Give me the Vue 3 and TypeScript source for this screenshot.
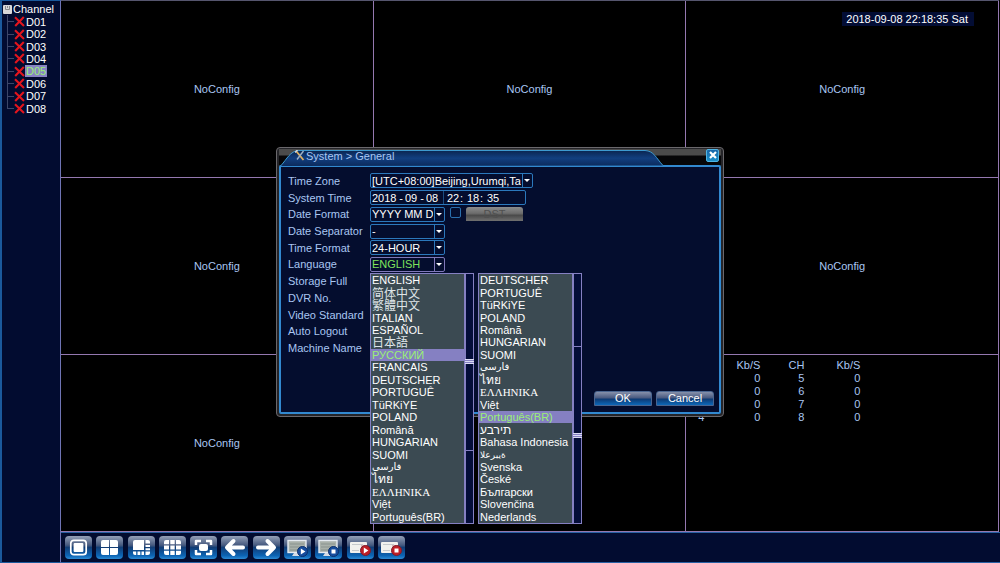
<script setup lang="ts">
import { ref } from 'vue'

interface Lang {
  name: string
  kind?: 'cjk' | 'arabic' | 'thai' | 'greek' | 'hebrew' | 'forced'
}

const channels = ['D01', 'D02', 'D03', 'D04', 'D05', 'D06', 'D07', 'D08']
const activeChannel = ref('D05')

const tiles = [true, true, true, true, false, true, true, false, false]

const rates = [
  ['', 0, 5, 0],
  ['', 0, 6, 0],
  ['', 0, 7, 0],
  [4, 0, 8, 0],
]

const languages: Lang[] = [
  { name: 'ENGLISH' },
  { name: '简体中文', kind: 'cjk' },
  { name: '繁體中文', kind: 'cjk' },
  { name: 'ITALIAN' },
  { name: 'ESPAÑOL' },
  { name: '日本語', kind: 'cjk' },
  { name: 'РУССКИЙ' },
  { name: 'FRANCAIS' },
  { name: 'DEUTSCHER' },
  { name: 'PORTUGUÊ' },
  { name: 'TüRKiYE' },
  { name: 'POLAND' },
  { name: 'Română' },
  { name: 'HUNGARIAN' },
  { name: 'SUOMI' },
  { name: 'فارسی', kind: 'arabic' },
  { name: 'ไทย', kind: 'thai' },
  { name: 'ΕΛΛΗΝΙΚΑ', kind: 'greek' },
  { name: 'Việt' },
  { name: 'Português(BR)' },
  { name: 'עברית', kind: 'hebrew' },
  { name: 'Bahasa Indonesia' },
  { name: 'العربية', kind: 'forced' },
  { name: 'Svenska' },
  { name: 'České' },
  { name: 'Български' },
  { name: 'Slovenčina' },
  { name: 'Nederlands' },
]

const lists = [
  { id: 'first', items: languages.slice(0, 20), active: 'РУССКИЙ', scrolled: false },
  { id: 'second', items: languages.slice(8), active: 'Português(BR)', scrolled: true },
]

const otherSettings = ['Storage Full', 'DVR No.', 'Video Standard', 'Auto Logout', 'Machine Name']

const tools = ['Single view', 'Four views', 'Eight views', 'Nine views', 'Full screen', 'Previous', 'Next', 'Start playback', 'Stop playback', 'Start recording', 'Stop recording']

const timeZone = ref('[UTC+08:00]Beijing,Urumqi,Taipei')
const dateFormat = ref('YYYY MM DD')
const dateSeparator = ref('-')
const timeFormat = ref('24-HOUR')
const language = ref('ENGLISH')
const dst = ref(false)
</script>

<template>
  <div class="screen">
    <nav class="sidebar" aria-label="Channels">
      <div class="root">
        <svg width="9" height="9" viewBox="0 0 9 9"><rect width="9" height="9" rx="1" fill="#d8d8d8" /><path d="M2.5 1v3.5h4V1M4.5 1v2" stroke="#8a8a8a" fill="none" /></svg>
        <span>Channel</span>
      </div>
      <button v-for="c in channels" :key="c" class="channel" :class="{ active: c === activeChannel, last: c === 'D08' }" @click="activeChannel = c">
        <svg width="11" height="11" viewBox="0 0 11 11"><path d="M1 1.2 10 10M9.8 1 1.2 10" stroke="#e3151d" stroke-width="2.1" fill="none" /></svg>
        <span>{{ c }}</span>
      </button>
    </nav>

    <main class="main">
      <div class="wall">
        <section v-for="(shown, i) in tiles" :key="i" class="tile">
          <span v-if="shown">NoConfig</span>
          <time v-if="i === 2" class="clock">2018-09-08 22:18:35 Sat</time>
          <table v-if="i === 8" class="rates">
            <thead>
              <tr><th></th><th>Kb/S</th><th>CH</th><th>Kb/S</th></tr>
            </thead>
            <tbody>
              <tr v-for="r in rates" :key="r[2]"><td v-for="(v, k) in r" :key="k">{{ v }}</td></tr>
            </tbody>
          </table>
        </section>
      </div>
      <div class="toolbar">
        <div class="tools">
          <button v-for="(t, i) in tools" :key="t" class="tool" :aria-label="t">
            <svg width="27" height="23" viewBox="0 0 27 23" fill="#fff">
              <template v-if="i === 0">
                <rect x="5.8" y="4.3" width="15.4" height="14.4" rx="3" fill="none" stroke="#fff" stroke-width="1.7" />
                <rect x="8.6" y="7" width="9.8" height="9" rx="1" />
              </template>
              <template v-else-if="i === 1">
                <path d="M7 4h6v7H5V6q0-2 2-2ZM14 4h6q2 0 2 2v5h-8ZM5 12h8v7H7q-2 0-2-2ZM14 12h8v5q0 2-2 2h-6Z" />
              </template>
              <template v-else-if="i === 2">
                <path d="M7 4h9v10H5V6q0-2 2-2ZM17.5 4H20q2 0 2 2v1.5h-4.5ZM17.5 9H22v2h-4.5ZM17.5 12.3H22v2h-4.5ZM5 15.5h3.2V19H7q-2 0-2-2ZM9.5 15.5h2.8V19H9.5ZM13.5 15.5H16V19h-2.5ZM17.5 15.5H22V17q0 2-2 2h-2.5Z" />
              </template>
              <template v-else-if="i === 3">
                <path d="M7 4h3v4.2H5V6q0-2 2-2ZM11.3 4h4.4v4.2h-4.4ZM17 4h3q2 0 2 2v2.2h-5ZM5 9.5h5v4H5ZM11.3 9.5h4.4v4h-4.4ZM17 9.5h5v4h-5ZM5 14.8h5V19H7q-2 0-2-2ZM11.3 14.8h4.4V19h-4.4ZM17 14.8h5V17q0 2-2 2h-3Z" />
              </template>
              <template v-else-if="i === 4">
                <rect x="9" y="8" width="9" height="7" rx="2" />
                <path d="M6 9V5h5M16 5h5v4M21 14v4h-5M11 18H6v-4" fill="none" stroke="#fff" stroke-width="2.5" stroke-linejoin="round" />
              </template>
              <path v-else-if="i === 5" d="M12.5 5 6 11.5l6.5 6.5M6.5 11.5H22" fill="none" stroke="#fff" stroke-width="4" stroke-linejoin="round" stroke-linecap="round" />
              <path v-else-if="i === 6" d="m14.5 5 6.5 6.5-6.5 6.5M20.5 11.5H5" fill="none" stroke="#fff" stroke-width="4" stroke-linejoin="round" stroke-linecap="round" />
              <template v-else-if="i < 9">
                <rect x="4" y="4.5" width="18" height="12" fill="#a9b1aa" stroke="#e6ecf2" stroke-width="1.4" />
                <path d="M6 8h14M6 11h14M6 14h14" stroke="#89938f" />
                <path d="M10 17h6l2 3H8Z" fill="#d6dce4" />
                <circle cx="18.5" cy="15.5" r="5" fill="#164d9e" stroke="#0b2e6b" />
                <path v-if="i === 7" d="m16.8 12.6 4.6 2.9-4.6 2.9Z" />
                <rect v-else x="16.5" y="13.5" width="4" height="4" />
              </template>
              <template v-else>
                <rect x="3" y="6" width="17" height="11" rx="1" fill="#f1f1ee" />
                <path d="M5 8.5h11M5 14.5h7" stroke="#c5c9cc" />
                <path d="M14 9h6v3h-6Z" fill="#d8b0b0" />
                <circle cx="18.5" cy="14.5" r="5" fill="#bf1f26" stroke="#7c1d2b" />
                <path v-if="i === 9" d="m16.8 11.6 4.6 2.9-4.6 2.9Z" />
                <rect v-else x="16.5" y="12.5" width="4" height="4" />
              </template>
            </svg>
          </button>
        </div>
      </div>
    </main>

    <div class="overlay">
      <div class="dialog" role="dialog" aria-labelledby="dialog-title">
        <header class="titlebar">
          <svg class="tab" width="384" height="17" viewBox="0 0 384 17">
            <defs>
              <linearGradient id="tab-fill" x1="0" y1="0" x2="0" y2="1"><stop offset="0" stop-color="#0a2550" /><stop offset=".5" stop-color="#123f80" /><stop offset="1" stop-color="#0c2a5c" /></linearGradient>
            </defs>
            <path d="M2 17C8 10 11 2 20 1.5H366C375 2 377 9 384 16.5Z" fill="url(#tab-fill)" />
            <path d="M2 16.5C8 10 11 2 20 1.5H366C375 2 377 9 384 16.5" fill="none" stroke="#3d9ad0" />
          </svg>
          <h1 id="dialog-title">
            <svg width="10" height="11" viewBox="0 0 10 11"><path d="m1.5 1.5 7 8.5" stroke="#e0b060" stroke-width="1.8" /><path d="M8.5 1 2 9.5" stroke="#9eb0c4" stroke-width="1.4" /><path d="M0 2.5 2.5 0" stroke="#d8dde4" stroke-width="1.5" /></svg>
            <span>System &gt; General</span>
          </h1>
          <button class="close" aria-label="Close">
            <svg width="8" height="8" viewBox="0 0 8 8"><path d="m1 1 6 6M7 1 1 7" stroke="#fff" stroke-width="2.2" /></svg>
          </button>
        </header>

        <form class="body" @submit.prevent>
          <div class="fields">
            <label for="tz">Time Zone</label>
            <div class="control">
              <span class="drop wide"><select id="tz" v-model="timeZone"><option>[UTC+08:00]Beijing,Urumqi,Taipei</option></select></span>
            </div>

            <label for="year">System Time</label>
            <div class="control">
              <div class="datetime">
                <div class="date">
                  <input id="year" class="year" value="2018" aria-label="Year" /><span>-</span><input value="09" aria-label="Month" /><span>-</span><input value="08" aria-label="Day" />
                </div>
                <div class="clocktime">
                  <input value="22" aria-label="Hour" /><span>:</span><input value="18" aria-label="Minute" /><span>:</span><input value="35" aria-label="Second" />
                </div>
              </div>
            </div>

            <label for="df">Date Format</label>
            <div class="control">
              <span class="drop"><select id="df" v-model="dateFormat"><option>YYYY MM DD</option></select></span>
              <input v-model="dst" type="checkbox" class="check" aria-label="DST enabled" />
              <button type="button" class="dst" disabled>DST</button>
            </div>

            <label for="ds">Date Separator</label>
            <div class="control">
              <span class="drop"><select id="ds" v-model="dateSeparator"><option>-</option></select></span>
            </div>

            <label for="tf">Time Format</label>
            <div class="control">
              <span class="drop"><select id="tf" v-model="timeFormat"><option>24-HOUR</option></select></span>
            </div>

            <label for="lang">Language</label>
            <div class="control">
              <span class="drop focus"><select id="lang" v-model="language"><option>ENGLISH</option></select></span>
              <div class="menus">
                <div v-for="l in lists" :key="l.id" class="menu">
                  <ul role="listbox" aria-label="Language">
                    <li v-for="o in l.items" :key="o.name" role="option" :aria-selected="o.name === l.active" :class="[o.kind, { active: o.name === l.active }]" @click="language = o.name">{{ o.name }}</li>
                  </ul>
                  <div class="scroll" :class="{ end: l.scrolled }"><div class="thumb"><i></i></div></div>
                </div>
              </div>
            </div>

            <span v-for="s in otherSettings" :key="s" class="name">{{ s }}</span>
          </div>

          <footer class="actions">
            <button type="submit">OK</button>
            <button type="button">Cancel</button>
          </footer>
        </form>
      </div>
    </div>
  </div>
</template>

<style>
body {
  background: #000;
}
</style>

<style scoped>
* {
  box-sizing: border-box;
}
.screen {
  position: relative;
  display: flex;
  height: 100vh;
  overflow: hidden;
  background: #000;
  color: #a9c6f2;
  font: 11px/12px "Liberation Sans", "Noto Sans CJK SC", sans-serif;
}
button,
input,
select {
  margin: 0;
  padding: 0;
  border: 0;
  background: none;
  color: inherit;
  font: inherit;
}
svg {
  display: block;
  flex: none;
}

.sidebar {
  flex: none;
  display: grid;
  grid-template-rows: repeat(9, 1fr);
  width: 61px;
  padding: 2px 0 calc(100vh - 116px) 2px;
  border: solid #1b5a9c;
  border-width: 1px 1px 1px 2px;
  border-right-color: #6f74b4;
  background: #020c30;
  color: #fff;
}
.root {
  display: flex;
  align-items: center;
  gap: 1px;
}
.root svg {
  margin-left: -1px;
}
.channel {
  display: flex;
  align-items: center;
  padding-left: 10px;
  background: linear-gradient(#3c4668, #3c4668) 3px 50% / 7px 1px no-repeat, linear-gradient(#3c4668, #3c4668) 3px 0 / 1px 100% no-repeat;
  text-align: left;
}
.channel.last {
  background-size: 7px 1px, 1px 50%;
}
.channel span {
  padding: 0 1px;
}
.channel.active span {
  background: #8884c4;
  color: #9af074;
}

.main {
  flex: 1;
  display: flex;
  flex-direction: column;
  min-width: 0;
}
.wall {
  flex: 1;
  display: grid;
  grid-template: repeat(3, 1fr) / repeat(3, 1fr);
  margin-right: 1px;
  border-top: 1px solid #55556e;
}
.tile {
  position: relative;
  display: grid;
  place-items: center;
  min-width: 0;
  border: solid #9478b0;
  border-width: 0 1px 1px 0;
}
.clock {
  position: absolute;
  top: 11px;
  right: 24px;
  padding: 1px 6px 1px 4px;
  background: #030d34;
  color: #fff;
}
.rates {
  place-self: start;
  margin-top: 3px;
  border-collapse: collapse;
  text-align: right;
}
.rates th,
.rates td {
  width: 56px;
  height: 13px;
  padding: 0;
  font-weight: normal;
}
.rates :is(th, td):first-child {
  width: 18px;
}
.rates :is(th, td):nth-child(3) {
  width: 44px;
}

.toolbar {
  flex: none;
  display: flex;
  align-items: center;
  height: 31px;
  padding-left: 4px;
  border: solid #2861a4;
  border-width: 1px 0;
  background: #020c30;
}
.tools {
  display: flex;
  justify-content: space-between;
  width: 340px;
}
.tool {
  border-radius: 4px;
  background: linear-gradient(#94a0b8, #46597e 40%, #123d75 50%, #0c64b4 85%, #2b8ad4);
}

.overlay {
  position: absolute;
  inset: 0;
  display: grid;
  place-items: center;
}
.dialog {
  width: 448px;
  padding: 1px 2px 2px;
  border: 1px solid #6a686c;
  border-radius: 4px;
  background: #242428;
}
.titlebar {
  position: relative;
  display: flex;
  justify-content: space-between;
  height: 16px;
  padding: 0 2px 0 16px;
  background: linear-gradient(#4b4b4b 6px, #060608 7px);
}
.tab {
  position: absolute;
  left: 0;
  top: 0;
}
h1 {
  position: relative;
  display: flex;
  align-items: center;
  gap: 1px;
  height: 14px;
  margin: 0;
  font: inherit;
}
.close {
  display: grid;
  place-items: center;
  width: 13px;
  height: 13px;
  border: 1px solid #4fb4e4;
  border-radius: 2px;
  background: linear-gradient(#1866a8, #1c8fc8);
}
.body {
  padding: 6px 5px 6px 7px;
  border: 2px solid #3289d0;
  border-radius: 2px;
  background: #040d2e;
}
.fields {
  display: grid;
  grid-template-columns: 82px 1fr;
  grid-template-rows: repeat(11, 1fr);
  align-items: center;
  height: 184px;
}
.name {
  grid-column: 1;
}
.fields label,
.name {
  white-space: nowrap;
}
.control {
  position: relative;
  display: flex;
  align-items: center;
  color: #fff;
}
.drop {
  position: relative;
  display: block;
  width: 75px;
  height: 15px;
  border: 1px solid #2b78bc;
  border-radius: 2px;
}
.drop.wide {
  width: 163px;
}
.drop select {
  display: block;
  width: 100%;
  height: 13px;
  padding: 0 11px 0 1px;
  appearance: none;
  outline: 0;
}
.drop::before {
  content: "";
  position: absolute;
  top: 0;
  right: 9px;
  bottom: 0;
  border-left: 1px solid #2b78bc;
}
.drop::after {
  content: "";
  position: absolute;
  top: 5px;
  right: 2px;
  border: solid transparent;
  border-width: 3px 3px 0;
  border-top-color: #fff;
  pointer-events: none;
}
.drop.focus {
  border-color: #7f78b8;
  color: #7fe35c;
}
.drop.focus::before {
  border-color: #7f78b8;
}
.datetime {
  display: flex;
  width: 156px;
  height: 15px;
  border: 1px solid #2b78bc;
  border-radius: 2px;
}
.date,
.clocktime {
  display: flex;
  align-items: center;
}
.date {
  width: 73px;
  padding-left: 1px;
  border-right: 1px solid #1b4c80;
}
.clocktime {
  padding-left: 3px;
}
.datetime input {
  width: 13px;
  height: 13px;
}
.datetime .year {
  width: 25px;
}
.datetime span {
  width: 8px;
  text-align: center;
}
.clocktime span {
  width: 7px;
  text-align: left;
}
.check {
  appearance: none;
  width: 11px;
  height: 11px;
  margin: -3px 5px 0;
  border: 1px solid #2a6fae;
  border-radius: 2px;
}
.dst {
  width: 57px;
  height: 14px;
  border-radius: 3px 3px 0 0;
  background: linear-gradient(#8c8c8c, #6c6c6c 45%, #4a4a4a 60%, #707070);
  color: #505050;
}

.menus {
  position: absolute;
  top: 16px;
  left: 0;
  z-index: 1;
  display: flex;
  gap: 4px;
}
.menu {
  display: flex;
  width: 104px;
  height: 251px;
  border: 1px solid #8580c2;
  background: #3b4a52;
}
.menu ul {
  flex: 1;
  display: grid;
  grid-template-rows: repeat(20, minmax(0, 1fr));
  min-width: 0;
  margin: 0;
  padding: 0;
  list-style: none;
}
.menu li {
  display: flex;
  align-items: center;
  padding-left: 1px;
  line-height: 12px;
  white-space: nowrap;
}
.menu li.active {
  background: #8580c2;
  color: #9af074;
}
.menu .cjk {
  color: #dfe5e8;
  font: 12px/10px "Noto Sans CJK SC", sans-serif;
}
.menu .arabic {
  font: 10px/12px "DejaVu Sans", sans-serif;
}
.menu .thai {
  font: 12px/12px "Liberation Serif", serif;
}
.menu .greek {
  font-family: "Liberation Serif", serif;
}
.menu .forced,
.menu .hebrew {
  direction: ltr;
  unicode-bidi: bidi-override;
}
.menu .forced {
  font: 9px/12px "DejaVu Sans", sans-serif;
}
.menu .hebrew {
  font-size: 12px;
}
.scroll {
  display: flex;
  flex-direction: column;
  width: 9px;
  border-left: 2px solid #8580c2;
  background: #040d38;
}
.scroll.end {
  justify-content: flex-end;
}
.thumb {
  display: grid;
  place-items: center;
  height: 71%;
  border-bottom: 1px solid #8580c2;
}
.end .thumb {
  border-width: 1px 0 0;
  border-top: 1px solid #8580c2;
}
.thumb i {
  width: 9px;
  height: 5px;
  margin: 0 -1px;
  border: solid #dcdcf4;
  border-width: 1px 0;
  background: linear-gradient(#8580c2 1px, #dcdcf4 1px 2px, #8580c2 2px);
}

.actions {
  display: flex;
  justify-content: flex-end;
  gap: 4px;
  margin-top: 34px;
}
.actions button {
  width: 58px;
  height: 15px;
  border: 1px solid #4a6590;
  border-radius: 3px 3px 0 0;
  background: linear-gradient(#8690aa, #4a5a80 45%, #0d3a74 55%, #0d68b8);
  color: #fff;
}
</style>
